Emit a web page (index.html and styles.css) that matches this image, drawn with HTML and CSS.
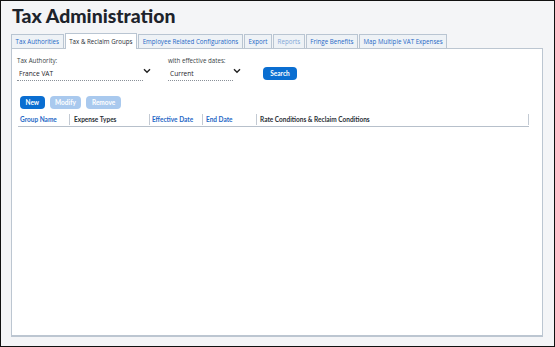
FILE: index.html
```html
<!DOCTYPE html>
<html>
<head>
<meta charset="utf-8">
<link rel="stylesheet" href="styles.css">
</head>
<body>
<div class="frame">
  <h1 class="title">Tax Administration</h1>
  <div class="tabs">
    <div class="tab">Tax Authorities</div>
    <div class="tab active">Tax &amp; Reclaim Groups</div>
    <div class="tab">Employee Related Configurations</div>
    <div class="tab">Export</div>
    <div class="tab muted">Reports</div>
    <div class="tab">Fringe Benefits</div>
    <div class="tab">Map Multiple VAT Expenses</div>
  </div>
  <div class="panel">
    <div class="filters">
      <div class="field authority">
        <div class="label">Tax Authority:</div>
        <div class="select"><span>France VAT</span></div>
      </div>
      <svg class="chev" width="8" height="6" viewBox="0 0 8 6"><path d="M1 1.2 L4 4.2 L7 1.2" fill="none" stroke="#222" stroke-width="1.4"/></svg>
      <div class="field dates">
        <div class="label">with effective dates:</div>
        <div class="select"><span>Current</span></div>
      </div>
      <svg class="chev" width="8" height="6" viewBox="0 0 8 6"><path d="M1 1.2 L4 4.2 L7 1.2" fill="none" stroke="#222" stroke-width="1.4"/></svg>
      <button class="btn search">Search</button>
    </div>
    <div class="actions">
      <button class="btn">New</button>
      <button class="btn disabled">Modify</button>
      <button class="btn disabled">Remove</button>
    </div>
    <div class="thead">
      <div class="th link c1">Group Name</div>
      <div class="th c2">Expense Types</div>
      <div class="th link c3">Effective Date</div>
      <div class="th link c4">End Date</div>
      <div class="th c5">Rate Conditions &amp; Reclaim Conditions</div>
    </div>
  </div>
</div>
</body>
</html>
```
FILE: styles.css
```css
* { box-sizing: border-box; }
html, body { margin: 0; padding: 0; }
body { background: #f4f5f7; font-family: "Open Sans", "Liberation Sans", sans-serif; }
.frame {
  width: 555px; height: 347px;
  border: 1px solid #111;
  padding: 0 10px 0 10px;
  display: flex; flex-direction: column;
}
.title {
  margin: 3px 0 0 1px;
  font-family: Lato, "Open Sans", sans-serif;
  font-weight: 900;
  font-size: 19.4px;
  line-height: 24px;
  color: #1d232b;
}
.tabs {
  display: flex; align-items: flex-end;
  margin-top: 5px;
  height: 15px;
  gap: 1px;
  position: relative; z-index: 1;
}
.tab {
  height: 14px;
  padding: 0 3.6px;
  font-size: 6.2px;
  line-height: 13px;
  color: #1f68c6;
  background: #eef2f6;
  border: 1px solid #b9c5d2;
  border-bottom: none;
  white-space: nowrap;
}
.tab.active {
  height: 16px;
  line-height: 15px;
  background: #fff;
  color: #2a2f36;
  margin-bottom: -1px;
}
.tab.muted { color: #7fa6d6; }
.panel {
  flex: none;
  height: 289px;
  background: #fff;
  border: 1px solid #bcc6d1;
  border-bottom-width: 2px;
  padding: 0 0 0 5px;
  margin-right: 1px;
}
.filters { display: flex; align-items: flex-start; margin-top: 8px; }
.field .label { font-size: 6.2px; line-height: 8px; color: #3a3f45; }
.select {
  margin-top: 4px;
  border-bottom: 1px dotted #8a9098;
  height: 12px;
  font-size: 6.6px; line-height: 10px; color: #1e2329;
  padding-left: 2px;
}
.authority { width: 126px; }
.dates { width: 65px; margin-left: 17px; }
.chev { margin-top: 11px; margin-left: 0px; }
.btn {
  font-family: Lato, "Open Sans", sans-serif;
  font-weight: 700;
  font-size: 6.5px;
  color: #fff;
  background: #0a6ed1;
  border: none;
  border-radius: 4px;
  height: 13px;
  padding: 0 5.5px;
  line-height: 13px;
}
.search { margin-left: 22px; margin-top: 10px; width: 34px; padding: 0; }
.actions { display: flex; gap: 5px; margin-top: 15px; margin-left: 3px; }
.btn.disabled { background: #a9c9ee; }
.thead {
  display: flex;
  margin-top: 5px;
  width: 511px;
  margin-left: 1px;
  border-bottom: 1px solid #b7c0cb;
  height: 13px;
}
.th {
  font-family: Lato, "Open Sans", sans-serif;
  font-weight: 700;
  font-size: 6.5px;
  line-height: 12px;
  color: #2a2f36;
  padding-left: 2px;
  border-right: 1px solid #c3cad3;
  margin-bottom: 1px;
}
.th.link { color: #1f68c6; }
.c1 { width: 52px; }
.c2 { width: 80px; padding-left: 4px; }
.c3 { width: 53px; }
.c4 { width: 54px; padding-left: 3px; }
.c5 { width: 272px; padding-left: 3px; }
```
